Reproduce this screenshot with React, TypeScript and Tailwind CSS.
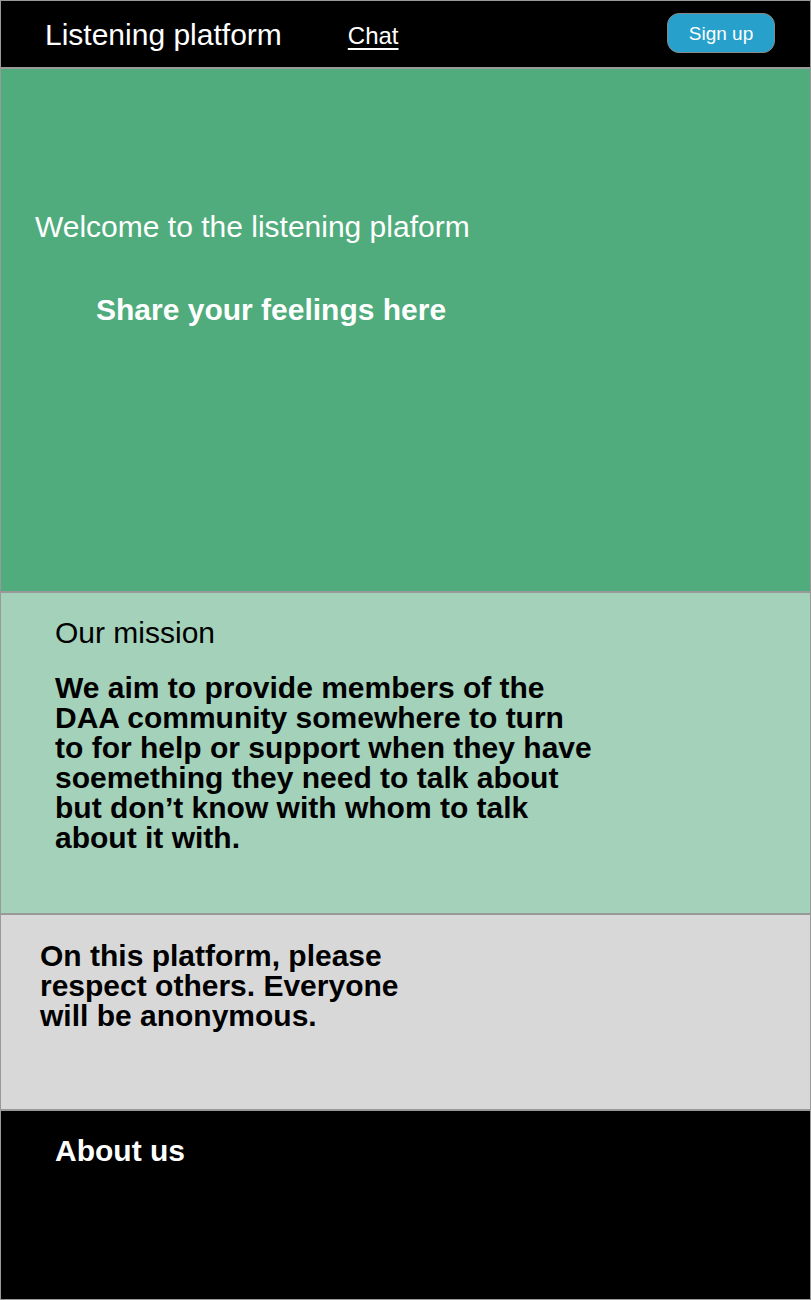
import React from 'react';

const font = { fontFamily: '"Liberation Sans", Arial, sans-serif' };

function Header() {
  return (
    <header className="h-[68px] shrink-0 bg-black flex items-center pl-[44px] pr-[35px] border-b-2 border-[#999]">
      <span className="text-white text-[30px] leading-[30px] mt-[1px]">Listening platform</span>
      <a
        href="#"
        className="ml-[66px] mt-[4px] text-white text-[24px] leading-[24px] underline underline-offset-[4px] decoration-2"
      >
        Chat
      </a>
      <button className="ml-auto w-[108px] h-[40px] mb-[2px] rounded-[12px] bg-[#27a0cb] border border-[#888] text-white text-[19px] leading-[19px]">
        Sign up
      </button>
    </header>
  );
}

export default function App() {
  return (
    <div style={font} className="w-[811px] h-[1300px] border border-[#999] flex flex-col overflow-hidden">
      <Header />

      <section className="h-[524px] shrink-0 bg-[#50ac7c] border-b-2 border-[#999] pt-[143px] pl-[34px] text-white">
        <h1 className="text-[30px] leading-[30px]">Welcome to the listening plaform</h1>
        <p className="mt-[53px] ml-[61px] text-[30px] leading-[30px] font-bold">Share your feelings here</p>
      </section>

      <section className="h-[322px] shrink-0 bg-[#a4d1ba] border-b-2 border-[#999] pt-[25px] pl-[54px] text-black">
        <h2 className="text-[30px] leading-[30px]">Our mission</h2>
        <p className="mt-[25px] text-[30px] leading-[30px] font-bold">
          We aim to provide members of the
          <br />
          DAA community somewhere to turn
          <br />
          to for help or support when they have
          <br />
          soemething they need to talk about
          <br />
          but don’t know with whom to talk
          <br />
          about it with.
        </p>
      </section>

      <section className="h-[196px] shrink-0 bg-[#d8d8d8] border-b-2 border-[#999] pt-[26px] pl-[39px] text-black">
        <p className="text-[30px] leading-[30px] font-bold">
          On this platform, please
          <br />
          respect others. Everyone
          <br />
          will be anonymous.
        </p>
      </section>

      <footer className="flex-1 bg-black pt-[25px] pl-[54px]">
        <h3 className="text-white text-[30px] leading-[30px] font-bold">About us</h3>
      </footer>
    </div>
  );
}
